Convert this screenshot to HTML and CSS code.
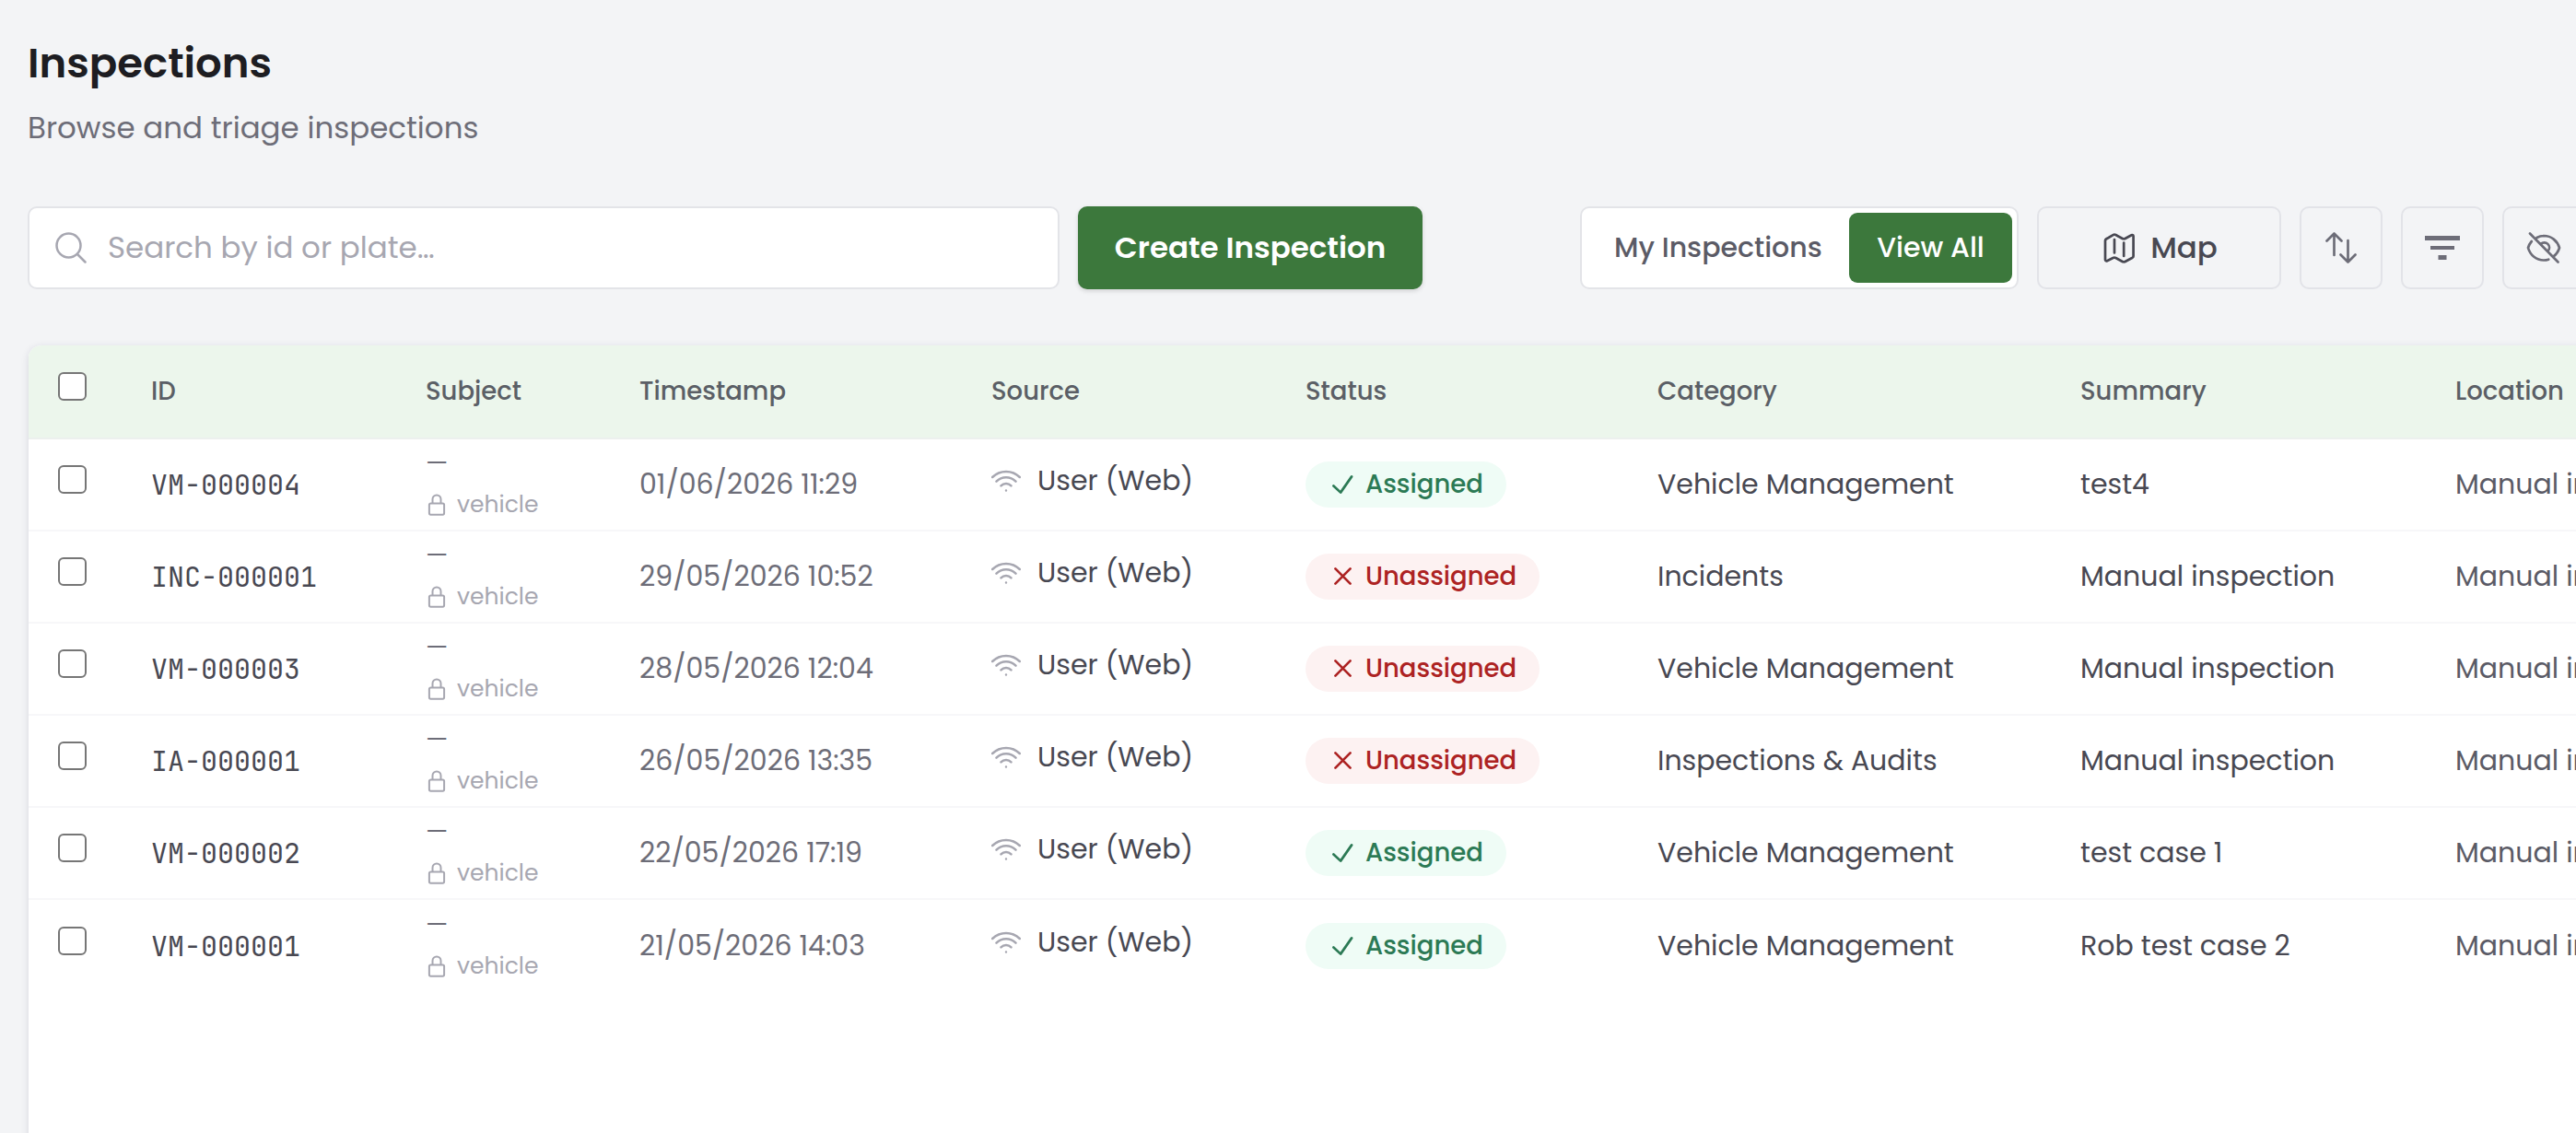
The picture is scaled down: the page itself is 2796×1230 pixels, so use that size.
FILE: index.html
```html
<!DOCTYPE html>
<html lang="en">
<head>
    <meta charset="UTF-8">
    <meta name="viewport" content="width=device-width, initial-scale=1.0">
    <title>Inspections</title>
    <link rel="stylesheet" href="styles.css">
</head>
<body>
    <svg class="sprite" xmlns="http://www.w3.org/2000/svg">
        <symbol id="i-lock" viewBox="0 0 20 24"><path d="M5.500 10.500V6a4.500 4.500 0 0 1 9 0v4.500M3.500 10.500h13a1.600 1.600 0 0 1 1.600 1.600v9a1.600 1.600 0 0 1-1.600 1.600h-13a1.600 1.600 0 0 1-1.600-1.600v-9a1.600 1.600 0 0 1 1.600-1.600z"/></symbol>
        <symbol id="i-wifi" viewBox="0 0 32 24"><path d="M1.200 8a21 21 0 0 1 29.600 0M5.500 12.700a14.800 14.800 0 0 1 21 0M10.500 17.300a7.800 7.800 0 0 1 11 0M16 22.400v.1"/></symbol>
        <symbol id="i-check" viewBox="0 0 24 22"><path d="M1.500 12.500 9.500 20 22 2"/></symbol>
        <symbol id="i-cross" viewBox="0 0 20 20"><path d="M1.500 1.500l17 17M18.500 1.500l-17 17"/></symbol>
    </svg>

    <header class="page-header">
        <h1>Inspections</h1>
        <p>Browse and triage inspections</p>
    </header>

    <div class="toolbar">
        <div class="search">
            <svg class="icon" width="34" height="34" viewBox="0 0 34 34"><circle cx="14.500" cy="14.500" r="13"/><path d="M24 24l8.500 8.500"/></svg>
            <span>Search by id or plate…</span>
        </div>
        <button class="btn-create">Create Inspection</button>
        <div class="toolbar-right">
            <div class="segmented">
                <button>My Inspections</button>
                <button class="active">View All</button>
            </div>
            <button class="btn btn-map">
                <svg class="icon" width="34" height="34" viewBox="0 0 34 34"><path d="M12 8v14.500M22.200 11.500V26M3 7.500l8-4.700a2 2 0 0 1 2 0l8.200 4.400a2 2 0 0 0 2 0l7.300-4a1.400 1.400 0 0 1 2.100 1.200v21.600a2 2 0 0 1-1 1.700l-8.400 4.500a2 2 0 0 1-2 0L13 27.800a2 2 0 0 0-2 0l-7 3.400a1.400 1.400 0 0 1-2-1.200V9.200a2 2 0 0 1 1-1.700z"/></svg>
                <span>Map</span>
            </button>
            <button class="btn btn-icon"><svg class="icon" width="34" height="34" viewBox="0 0 34 34"><path d="M9.500 25V1.500M1.500 9.500l8-8 8 8M24.500 9v23.500M16.500 24.500l8 8 8-8"/></svg></button>
            <button class="btn btn-icon"><svg class="icon-solid" width="38" height="26" viewBox="0 0 38 26"><path d="M0 0h38v5H0zM6 11h26v4H6zM14.500 21h9v5h-9z"/></svg></button>
            <button class="btn btn-icon"><svg class="icon" width="38" height="34" viewBox="0 0 38 34"><path d="M4 1.500l30.500 31M5.800 10a19 19 0 0 0-3.800 7C4.200 25 11 30.500 19 30.500c1.800 0 3.600-.3 5.200-.8M11.500 6A17 17 0 0 1 19 4c8.300 0 14.600 5.200 17 13a18.500 18.500 0 0 1-6.800 9.700M15.800 13a5.200 5.200 0 0 1 7.700 7.500"/></svg></button>
        </div>
    </div>

    <div class="table-card">
        <table>
            <colgroup>
                <col class="c-check"><col class="c-id"><col class="c-subject"><col class="c-time"><col class="c-source"><col class="c-status"><col class="c-category"><col class="c-summary"><col class="c-location">
            </colgroup>
            <thead>
                <tr>
                    <th><i class="checkbox"></i></th>
                    <th>ID</th>
                    <th>Subject</th>
                    <th>Timestamp</th>
                    <th>Source</th>
                    <th>Status</th>
                    <th>Category</th>
                    <th>Summary</th>
                    <th>Location</th>
                </tr>
            </thead>
            <tbody>
                <tr>
                    <td><i class="checkbox"></i></td>
                    <td class="id">VM-000004</td>
                    <td class="subject"><b>—</b><div class="kind"><svg class="icon"><use href="#i-lock"/></svg>vehicle</div></td>
                    <td class="time">01/06/2026 11:29</td>
                    <td><div class="source"><svg class="icon"><use href="#i-wifi"/></svg>User (Web)</div></td>
                    <td><div class="badge assigned"><svg class="icon"><use href="#i-check"/></svg>Assigned</div></td>
                    <td>Vehicle Management</td>
                    <td>test4</td>
                    <td class="location">Manual inspection</td>
                </tr>
                <tr>
                    <td><i class="checkbox"></i></td>
                    <td class="id">INC-000001</td>
                    <td class="subject"><b>—</b><div class="kind"><svg class="icon"><use href="#i-lock"/></svg>vehicle</div></td>
                    <td class="time">29/05/2026 10:52</td>
                    <td><div class="source"><svg class="icon"><use href="#i-wifi"/></svg>User (Web)</div></td>
                    <td><div class="badge unassigned"><svg class="icon"><use href="#i-cross"/></svg>Unassigned</div></td>
                    <td>Incidents</td>
                    <td>Manual inspection</td>
                    <td class="location">Manual inspection</td>
                </tr>
                <tr>
                    <td><i class="checkbox"></i></td>
                    <td class="id">VM-000003</td>
                    <td class="subject"><b>—</b><div class="kind"><svg class="icon"><use href="#i-lock"/></svg>vehicle</div></td>
                    <td class="time">28/05/2026 12:04</td>
                    <td><div class="source"><svg class="icon"><use href="#i-wifi"/></svg>User (Web)</div></td>
                    <td><div class="badge unassigned"><svg class="icon"><use href="#i-cross"/></svg>Unassigned</div></td>
                    <td>Vehicle Management</td>
                    <td>Manual inspection</td>
                    <td class="location">Manual inspection</td>
                </tr>
                <tr>
                    <td><i class="checkbox"></i></td>
                    <td class="id">IA-000001</td>
                    <td class="subject"><b>—</b><div class="kind"><svg class="icon"><use href="#i-lock"/></svg>vehicle</div></td>
                    <td class="time">26/05/2026 13:35</td>
                    <td><div class="source"><svg class="icon"><use href="#i-wifi"/></svg>User (Web)</div></td>
                    <td><div class="badge unassigned"><svg class="icon"><use href="#i-cross"/></svg>Unassigned</div></td>
                    <td>Inspections &amp; Audits</td>
                    <td>Manual inspection</td>
                    <td class="location">Manual inspection</td>
                </tr>
                <tr>
                    <td><i class="checkbox"></i></td>
                    <td class="id">VM-000002</td>
                    <td class="subject"><b>—</b><div class="kind"><svg class="icon"><use href="#i-lock"/></svg>vehicle</div></td>
                    <td class="time">22/05/2026 17:19</td>
                    <td><div class="source"><svg class="icon"><use href="#i-wifi"/></svg>User (Web)</div></td>
                    <td><div class="badge assigned"><svg class="icon"><use href="#i-check"/></svg>Assigned</div></td>
                    <td>Vehicle Management</td>
                    <td>test case 1</td>
                    <td class="location">Manual inspection</td>
                </tr>
                <tr>
                    <td><i class="checkbox"></i></td>
                    <td class="id">VM-000001</td>
                    <td class="subject"><b>—</b><div class="kind"><svg class="icon"><use href="#i-lock"/></svg>vehicle</div></td>
                    <td class="time">21/05/2026 14:03</td>
                    <td><div class="source"><svg class="icon"><use href="#i-wifi"/></svg>User (Web)</div></td>
                    <td><div class="badge assigned"><svg class="icon"><use href="#i-check"/></svg>Assigned</div></td>
                    <td>Vehicle Management</td>
                    <td>Rob test case 2</td>
                    <td class="location">Manual inspection</td>
                </tr>
            </tbody>
        </table>
    </div>
</body>
</html>
```
FILE: styles.css
```css
* { box-sizing: border-box; }
body { margin: 0; height: 1230px; overflow: hidden; background: #f3f4f6; font-family: Poppins, Inter, "Open Sans", sans-serif; color: #484852; }
h1, p { margin: 0; font-weight: normal; }
button { font: inherit; color: inherit; border: none; padding: 0; cursor: pointer; white-space: nowrap; }
.sprite { display: none; }
.icon { flex: none; fill: none; stroke: currentColor; stroke-width: 2.5; stroke-linecap: round; stroke-linejoin: round; }
.icon-solid { fill: currentColor; }

.page-header { padding: 37px 30px 0; height: 224px; }
.page-header h1 { font-size: 45px; line-height: 64px; font-weight: 600; color: #1d1d22; }
.page-header p { margin-top: 14px; font-size: 32.5px; line-height: 48px; color: #6d6d78; }

.toolbar { display: flex; gap: 20px; width: 2806px; padding-left: 30px; height: 90px; }
.search { display: flex; align-items: center; gap: 23px; width: 1120px; padding-left: 28px; background: #fff; border: 2px solid #e3e4e8; border-radius: 10px; font-size: 32.5px; color: #a7a7b1; }
.btn-create { width: 374px; background: #3c783c; border-radius: 10px; color: #fff; font-size: 32.5px; font-weight: 600; box-shadow: 0 2px 5px rgba(0,0,0,0.14); }
.toolbar-right { display: flex; gap: 20px; margin-left: auto; }
.toolbar-right .icon { stroke-width: 2.7; }
.segmented { display: flex; justify-content: space-between; width: 476px; padding: 5px; background: #fff; border: 2px solid #e3e4e8; border-radius: 10px; font-size: 30px; font-weight: 500; color: #5b5b66; }
.segmented button { background: none; padding-left: 30px; border-radius: 9px; }
.segmented .active { width: 177px; padding: 0; background: #3c783c; color: #fff; }
.btn { display: flex; align-items: center; justify-content: center; background: none; border: 2px solid #e2e3e8; border-radius: 10px; color: #6d6d78; }
.btn-map { gap: 17px; width: 265px; padding-left: 3px; font-size: 32.5px; font-weight: 500; color: #484852; }
.btn-icon { width: 90px; }

.table-card { width: 3000px; height: 900px; margin: 61px 0 0 31px; background: #fff; border-radius: 14px 0 0 0; overflow: hidden; box-shadow: 0 2px 8px rgba(30,30,80,0.13); }
table { width: 3000px; table-layout: fixed; border-collapse: separate; border-spacing: 0; white-space: nowrap; }
.c-check { width: 101px; }
.c-id { width: 298px; }
.c-subject { width: 232px; }
.c-time { width: 382px; }
.c-source { width: 341px; }
.c-status { width: 382px; }
.c-category { width: 459px; }
.c-summary { width: 407px; }
th, td { padding: 0 0 0 32px; text-align: left; vertical-align: middle; }
th { height: 102px; background: #ecf6ec; border-bottom: 2px solid #ecf0ee; font-size: 27.5px; font-weight: 500; color: #5b5f66; }
td { height: 100px; border-bottom: 2px solid #f7f7f9; font-size: 30px; }
tbody tr:last-child td { padding-top: 2px; border-bottom-color: #fff; }
.checkbox { display: block; width: 31px; height: 31px; margin-bottom: 12px; background: #fff; border: 2px solid #767676; border-radius: 6px; }
.id { font-family: "JetBrains Mono", "DejaVu Sans Mono", monospace; }
.time { color: #6d6d78; }
.location { color: #5b5b66; }
.subject b { display: block; height: 44px; font-size: 27.5px; line-height: 34px; font-weight: 400; color: #6d6d78; }
.kind { display: flex; align-items: center; gap: 12px; padding-left: 2px; font-size: 25px; line-height: 36px; color: #a7a7b1; }
.kind .icon { width: 20px; height: 24px; stroke-width: 2; }
.source { display: flex; align-items: center; gap: 18px; padding-bottom: 9px; }
.source .icon { width: 32px; height: 24px; color: #a7a7b1; }
.badge { display: inline-flex; align-items: center; height: 50px; border-radius: 25px; padding: 0 25px 1px 29px; font-size: 27.5px; font-weight: 500; vertical-align: middle; }
.badge .icon { width: 23px; height: 22px; margin-right: 13px; stroke-width: 2.8; }
.assigned { background: #effcf6; color: #2c7a55; }
.unassigned { background: #fdf2f2; color: #ad2323; }
.unassigned .icon { width: 19px; height: 19px; margin: 0 15px 0 2px; }
```
